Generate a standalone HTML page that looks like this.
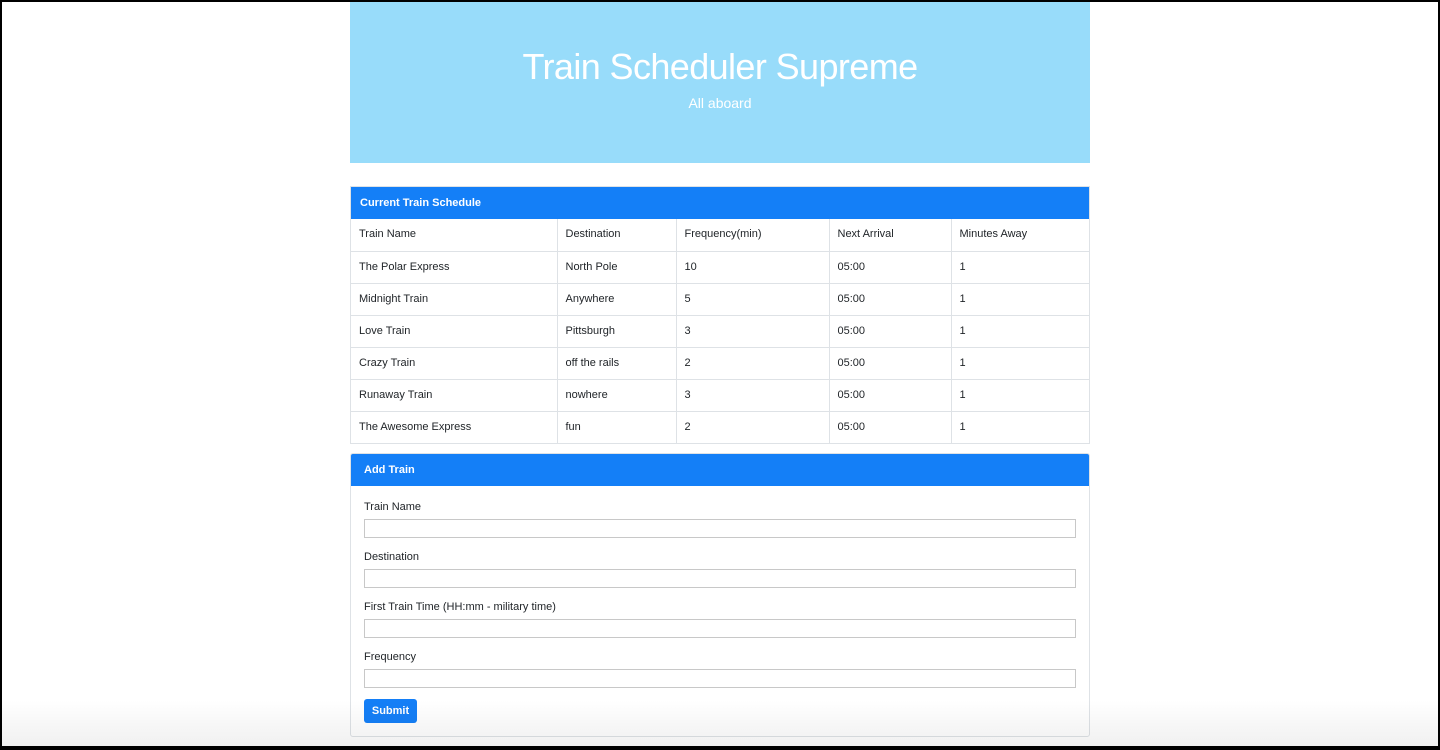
<!DOCTYPE html>
<html><head><style>
*{box-sizing:border-box;margin:0;padding:0}
body{width:1440px;height:750px;overflow:hidden;background:#fff;font-family:"Liberation Sans",sans-serif;position:relative;color:#212529}
.frame{position:absolute;left:0;top:0;width:1440px;height:750px;border:2px solid #000;border-bottom-width:4px;pointer-events:none}
.fade{position:absolute;left:0;top:700px;width:1440px;height:46px;background:linear-gradient(rgba(0,0,0,0),rgba(0,0,0,0.06))}
.jumbo{position:absolute;left:350px;top:2px;width:740px;height:161px;background:#98dcfa;color:#fff;text-align:center}
.jumbo h1{font-weight:300;font-size:36px;margin-top:44px;letter-spacing:-0.6px}
.jumbo p{font-size:14px;margin-top:7px}
.p1{position:absolute;left:350px;top:186px;width:740px;border:1px solid #dee2e6}
.hd{background:#147ff7;color:#fff;font-weight:bold;font-size:11px;height:32px;line-height:32px;padding-left:9px}
table{border-collapse:collapse;width:100%;font-size:11px}
td{border-top:1px solid #dee2e6;border-left:1px solid #dee2e6;height:32px;padding:0 0 0 8px;line-height:31px}
tr:first-child td{border-top:none}
td:first-child{border-left:none}
.p2{position:absolute;left:350px;top:453px;width:740px;height:284px;border:1px solid #dee2e6;border-radius:3px;overflow:hidden}
.p2 .hd{padding-left:13px}
.lab{position:absolute;left:13px;font-size:11px}
.in{position:absolute;left:13px;width:712px;height:19px;border:1px solid #c8c8c8;background:#fff}
.btn{position:absolute;left:13px;top:245px;width:53px;height:24px;background:#147ff7;color:#fff;font-weight:bold;font-size:11px;text-align:center;line-height:24px;border-radius:3px}
</style></head><body>
<div class="jumbo"><h1>Train Scheduler Supreme</h1><p>All aboard</p></div>
<div class="p1"><div class="hd">Current Train Schedule</div>
<table>
<colgroup><col style="width:206px"><col style="width:119px"><col style="width:153px"><col style="width:122px"><col></colgroup>
<tr><td>Train Name</td><td>Destination</td><td>Frequency(min)</td><td>Next Arrival</td><td>Minutes Away</td></tr>
<tr><td>The Polar Express</td><td>North Pole</td><td>10</td><td>05:00</td><td>1</td></tr>
<tr><td>Midnight Train</td><td>Anywhere</td><td>5</td><td>05:00</td><td>1</td></tr>
<tr><td>Love Train</td><td>Pittsburgh</td><td>3</td><td>05:00</td><td>1</td></tr>
<tr><td>Crazy Train</td><td>off the rails</td><td>2</td><td>05:00</td><td>1</td></tr>
<tr><td>Runaway Train</td><td>nowhere</td><td>3</td><td>05:00</td><td>1</td></tr>
<tr><td>The Awesome Express</td><td>fun</td><td>2</td><td>05:00</td><td>1</td></tr>
</table></div>
<div class="p2"><div class="hd">Add Train</div>
<div class="lab" style="top:47px">Train Name</div><div class="in" style="top:65px"></div>
<div class="lab" style="top:97px">Destination</div><div class="in" style="top:115px"></div>
<div class="lab" style="top:147px">First Train Time (HH:mm - military time)</div><div class="in" style="top:165px"></div>
<div class="lab" style="top:197px">Frequency</div><div class="in" style="top:215px"></div>
<div class="btn">Submit</div>
</div>
<div class="fade"></div>
<div class="frame"></div>
</body></html>
